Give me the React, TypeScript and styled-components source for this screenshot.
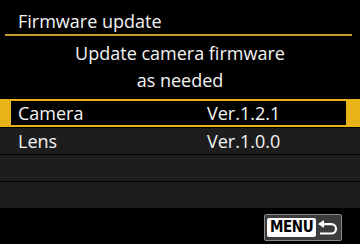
import React from "react";
import styled, { createGlobalStyle } from "styled-components";

const Global = createGlobalStyle`
  html, body { margin: 0; padding: 0; background: #000; }
  body { width: 360px; height: 244px; overflow: hidden; }
`;

const Screen = styled.div`
  width: 360px;
  height: 244px;
  background: #000;
  color: #f4f4f4;
  font-family: "Open Sans", "Noto Sans", sans-serif;
  display: flex;
  flex-direction: column;
`;

const Title = styled.div`
  padding: 9px 0 0 18px;
  height: 25px;
  font-size: 18px;
  line-height: 24px;
`;

const Rule = styled.div`
  height: 2px;
  margin: 0 8px 0 5px;
  background: #c29a2e;
`;

const Heading = styled.div`
  padding-top: 4px;
  text-align: center;
  font-size: 18px;
  line-height: 27px;
  height: 59px;
`;

const List = styled.div`
  display: flex;
  flex-direction: column;
  gap: 1px;
`;

const Row = styled.div<{ $selected?: boolean }>`
  display: grid;
  grid-template-columns: 189px 1fr;
  align-items: center;
  font-size: 18px;
  line-height: 24px;
  box-sizing: border-box;
  height: ${(p) => (p.$selected ? "28px" : "26px")};
  padding-left: ${(p) => (p.$selected ? "7px" : "18px")};
  background: ${(p) => (p.$selected ? "#000" : "#1d1d1d")};
  border-style: solid;
  border-color: #e7b316;
  border-width: ${(p) => (p.$selected ? "2px 14px 2px 11px" : "0")};
`;

const Footer = styled.div`
  flex: 1;
  display: flex;
  justify-content: flex-end;
  align-items: flex-start;
  padding: 6px 18px 0 0;
`;

const MenuButton = styled.div`
  display: flex;
  align-items: center;
  gap: 2px;
  width: 78px;
  height: 27px;
  box-sizing: border-box;
  padding: 0 3px 0 2px;
  background: #3b3b3b;
  border: 1px solid #8a8a8a;
  border-radius: 2px;
`;

const MenuLabel = styled.span`
  width: 50px;
  box-sizing: border-box;
  text-align: center;
  background: #fff;
  color: #000;
  font-family: "DejaVu Sans Condensed", "DejaVu Sans", sans-serif;
  font-weight: bold;
  font-size: 15px;
  line-height: 19px;
  border-radius: 2px;
  letter-spacing: -0.4px;
`;

const ReturnIcon = () => (
  <svg width="20" height="16" viewBox="0 0 20 16">
    <path d="M0 4 L6 0 L6 8 Z" fill="#fff" />
    <path
      d="M5 4 H13.5 A4.8 4.8 0 0 1 13.5 13.6 H2"
      fill="none"
      stroke="#fff"
      strokeWidth="2.2"
    />
  </svg>
);

const rows = [
  { name: "Camera", value: "Ver.1.2.1" },
  { name: "Lens", value: "Ver.1.0.0" },
  { name: "", value: "" },
  { name: "", value: "" },
];

export default function App() {
  return (
    <>
      <Global />
      <Screen>
        <Title>Firmware update</Title>
        <Rule />
        <Heading>
          Update camera firmware
          <br />
          as needed
        </Heading>
        <List>
          {rows.map((r, i) => (
            <Row key={i} $selected={i === 0}>
              <span>{r.name}</span>
              <span>{r.value}</span>
            </Row>
          ))}
        </List>
        <Footer>
          <MenuButton>
            <MenuLabel>MENU</MenuLabel>
            <ReturnIcon />
          </MenuButton>
        </Footer>
      </Screen>
    </>
  );
}
